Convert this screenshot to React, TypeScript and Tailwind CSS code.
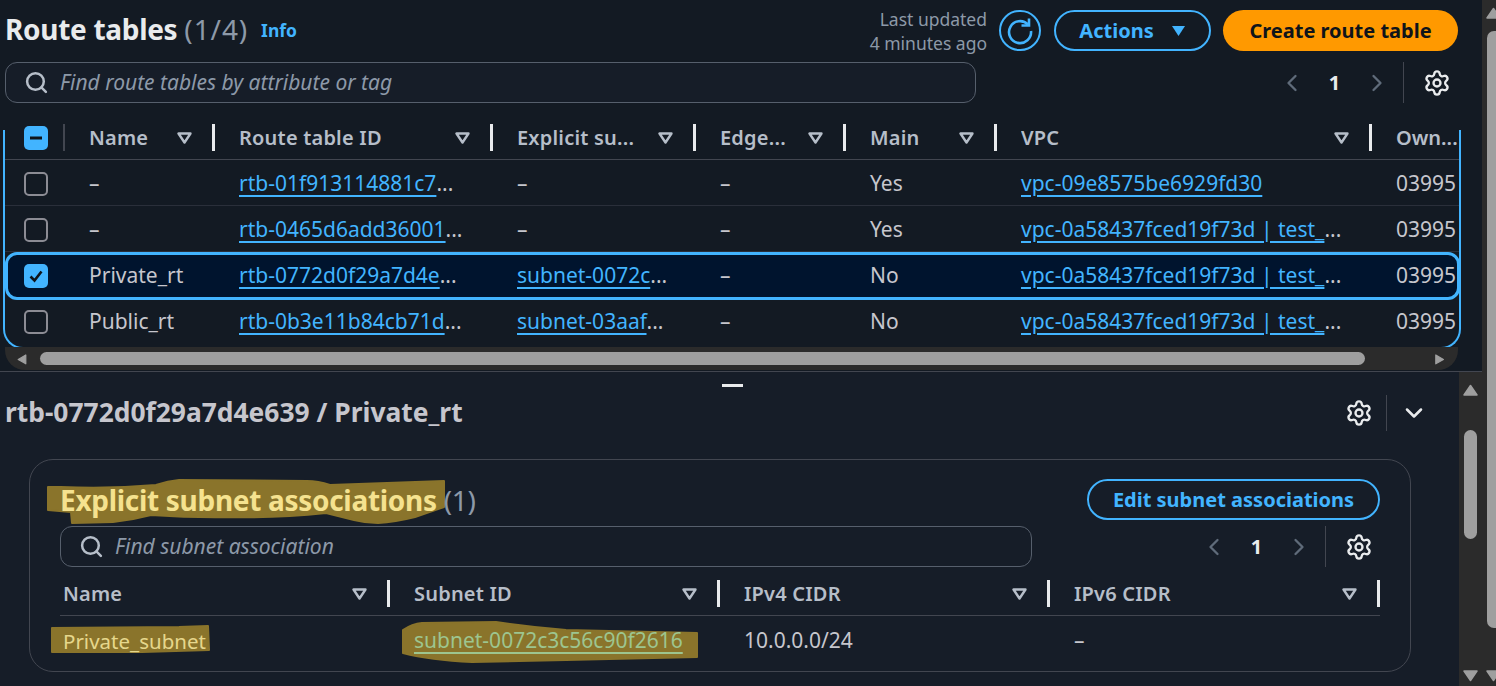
import { ChevronLeft, ChevronRight, ChevronDown, Search, Settings } from 'lucide-react';

const FONT = "font-['Noto_Sans',sans-serif]";

const COLS = [
  { label: 'Name', w: 'w-[150px]' },
  { label: 'Route table ID', w: 'w-[278px]' },
  { label: 'Explicit su...', w: 'w-[203px]' },
  { label: 'Edge...', w: 'w-[150px]' },
  { label: 'Main', w: 'w-[151px]' },
  { label: 'VPC', w: 'w-[375px]' },
];

const ROWS = [
  { name: '–', id: 'rtb-01f913114881c7', sub: '', main: 'Yes', vpc: 'vpc-09e8575be6929fd30', tail: '' },
  { name: '–', id: 'rtb-0465d6add36001', sub: '', main: 'Yes', vpc: 'vpc-0a58437fced19f73d | test_', tail: '...' },
  { name: 'Private_rt', id: 'rtb-0772d0f29a7d4e', sub: 'subnet-0072c', main: 'No', vpc: 'vpc-0a58437fced19f73d | test_', tail: '...', selected: true },
  { name: 'Public_rt', id: 'rtb-0b3e11b84cb71d', sub: 'subnet-03aaf', main: 'No', vpc: 'vpc-0a58437fced19f73d | test_', tail: '...' },
];

function SortIcon() {
  return (
    <svg width="15" height="12" viewBox="0 0 15 12" className="shrink-0">
      <path d="M1.5 1.5h12L7.5 10.5z" fill="none" stroke="#b6bec9" strokeWidth="2.4" strokeLinejoin="round" />
    </svg>
  );
}

function HeaderCell({ label, w, size = 'pl-[24px]' }: { label: string; w: string; size?: string }) {
  return (
    <div className={`${w} ${size} h-[27px] flex items-center shrink-0`}>
      <span className="flex-1 truncate text-[20px] tracking-[0.2px] font-semibold text-[#b6bec9]">{label}</span>
      <SortIcon />
      <span className="ml-[20px] w-[3px] h-[27px] bg-[#e9ebed]" />
    </div>
  );
}

function Box({ state }: { state?: 'dash' | 'check' }) {
  if (!state) return <span className="block w-[24px] h-[24px] rounded-[5px] border-2 border-[#8c8c94]" />;
  return (
    <span className="w-[24px] h-[24px] rounded-[5px] bg-[#42b4ff] flex items-center justify-center">
      <svg width="18" height="18" viewBox="0 0 18 18">
        {state === 'dash' ? (
          <path d="M3 9h12" stroke="#0f141a" strokeWidth="3" />
        ) : (
          <path d="M3.5 9.5l4 4 7-9" fill="none" stroke="#0f141a" strokeWidth="2.6" />
        )}
      </svg>
    </span>
  );
}

function Cut({ text }: { text: string }) {
  return (
    <span>
      <a className="underline decoration-2 underline-offset-[4px] text-[#42b4ff]">{text}</a>
      <span className="text-[#c6c6cd]">...</span>
    </span>
  );
}

function Pager() {
  return (
    <div className="flex items-center h-[41px] mr-[7px]">
      <ChevronLeft size={28} strokeWidth={2} className="text-[#5f6b7a]" />
      <span className="w-[57px] text-center text-[20px] font-bold text-[#e9ebed]">1</span>
      <ChevronRight size={28} strokeWidth={2} className="text-[#5f6b7a]" />
      <span className="ml-[12px] w-px h-[41px] bg-[#424650]" />
      <Settings size={28} strokeWidth={2} className="ml-[19px] text-[#e9ebed]" />
    </div>
  );
}

function Tri({ dir, color = '#9f9f9f', size = 15 }: { dir: 'up' | 'down' | 'left' | 'right'; color?: string; size?: number }) {
  const d = {
    up: 'M7.5 1.5L14 11H1z',
    down: 'M1 1h13L7.5 10.5z',
    left: 'M11 1v11L1.5 6.5z',
    right: 'M1 1v11l9.5-5.5z',
  }[dir];
  return (
    <svg width={size} height="12" viewBox="0 0 15 12" className="shrink-0">
      <path d={d} fill={color} stroke={color} strokeWidth="1.5" strokeLinejoin="round" />
    </svg>
  );
}

function TopPanel() {
  return (
    <section className="h-[371px] bg-[#131a23] pl-[5px] pr-[24px] pt-[10px]">
      <div className="flex h-[41px] items-center">
        <h1 className="text-[28px] font-bold text-[#e9ebed] leading-none -mt-[4px] tracking-[-0.3px]">
          Route tables <span className="font-normal tracking-[0.9px] text-[#8d99a8]">(1/4)</span>
        </h1>
        <a className="ml-[13px] text-[17.5px] font-bold text-[#42b4ff]">Info</a>
        <div className="ml-auto text-right text-[17.5px] leading-[24px] text-[#8d99a8]">
          <div>Last updated</div>
          <div>4 minutes ago</div>
        </div>
        <button className="ml-[12px] w-[42px] h-[41px] rounded-full border-[2.5px] border-[#42b4ff] flex items-center justify-center">
          <svg width="28" height="28" viewBox="0 0 28 28" fill="none" stroke="#42b4ff" strokeWidth="2.6">
            <path d="M22 7.5A11 11 0 1 0 25 14" />
            <path d="M15.5 8.5h7.5V1.5" />
          </svg>
        </button>
        <button className="ml-[13px] w-[157px] h-[41px] rounded-full border-[2.5px] border-[#42b4ff] flex items-center justify-center gap-[17px] text-[20px] font-bold text-[#42b4ff]">
          Actions
          <svg width="15" height="12" viewBox="0 0 15 12">
            <path d="M1 1h13L7.5 11z" fill="#42b4ff" />
          </svg>
        </button>
        <button className="ml-[12px] w-[235px] h-[41px] rounded-full bg-[#ff9900] text-[20px] font-bold text-[#0f141a]">
          Create route table
        </button>
      </div>

      <div className="mt-[11px] flex items-center">
        <div className="w-[971px] h-[41px] rounded-[12px] border border-[#565f6c] flex items-center pl-[18px] gap-[11px] bg-[#161d28]">
          <Search size={25} strokeWidth={2.4} className="text-[#b6bec9]" />
          <span className="text-[21px] italic text-[#8d99a8]">Find route tables by attribute or tag</span>
        </div>
        <div className="ml-auto">
          <Pager />
        </div>
      </div>

      {/* table */}
      <div className="relative -ml-[2px] mt-[13px] w-[1458px] h-[233px]">
        <div className="h-full rounded-b-[20px] border-x-2 border-b-2 border-[#42b4ff] overflow-hidden text-[21px] text-[#c6c6cd]">
          <div className="h-[44px] flex items-center border-b border-[#424650] whitespace-nowrap">
            <div className="w-[60px] shrink-0 flex items-center pl-[19px]">
              <Box state="dash" />
              <span className="ml-[15px] w-[2px] h-[27px] bg-[#424650]" />
            </div>
            {COLS.map((c) => (
              <HeaderCell key={c.label} label={c.label} w={c.w} />
            ))}
            <span className="pl-[24px] text-[20px] font-semibold text-[#b6bec9]">Own...</span>
          </div>
          {ROWS.map((r) => (
            <div
              key={r.id}
              className={
                r.selected
                  ? 'h-[48px] -mb-[2px] relative flex items-center whitespace-nowrap bg-[#00142e] border-[3px] border-[#42b4ff] rounded-[12px] -mr-[1px]'
                  : 'h-[46px] pt-[2px] flex items-center whitespace-nowrap border-b border-[#2a2f3a] last:border-b-0'
              }
            >
              <div className={r.selected ? 'w-[57px] shrink-0 pl-[16px]' : 'w-[60px] shrink-0 pl-[19px]'}>
                <Box state={r.selected ? 'check' : undefined} />
              </div>
              <div className="w-[150px] pl-[24px] shrink-0">{r.name}</div>
              <div className="w-[278px] pl-[24px] shrink-0"><Cut text={r.id} /></div>
              <div className="w-[203px] pl-[24px] shrink-0">{r.sub ? <Cut text={r.sub} /> : '–'}</div>
              <div className="w-[150px] pl-[24px] shrink-0">–</div>
              <div className="w-[151px] pl-[24px] shrink-0">{r.main}</div>
              <div className="w-[375px] pl-[24px] shrink-0">
                <a className="underline decoration-2 underline-offset-[4px] text-[#42b4ff]">{r.vpc}</a>
                {r.tail}
              </div>
              <div className="pl-[24px] shrink-0">03995</div>
            </div>
          ))}
        </div>
        {/* the focus outline only starts below the top of the header row */}
        <span className="absolute left-0 top-0 w-[2px] h-[14px] bg-[#131a23]" />
        <span className="absolute right-0 top-0 w-[2px] h-[14px] bg-[#131a23]" />
      </div>

      {/* horizontal scrollbar, sits on the table's bottom border */}
      <div className="relative -mt-[2px] w-[1453px] h-[23px] bg-[#2b2b2b] rounded-b-[20px] flex items-center pl-[12px] pr-[11px]">
        <Tri dir="left" size={12} />
        <span className="ml-[11px] w-[1325px] h-[13px] rounded-full bg-[#9f9f9f]" />
        <span className="ml-auto"><Tri dir="right" size={12} /></span>
      </div>
    </section>
  );
}

function BottomPanel() {
  return (
    <section className="flex-1 flex border-t border-[#424650] min-h-0">
      <div className="flex-1 bg-[#161d28] pl-[5px] pr-[42px] min-w-0">
        <div className="flex justify-center pt-[12px] pl-[42px]">
          <span className="w-[21px] h-[3px] bg-[#e9ebed]" />
        </div>
        <div className="mt-[8px] flex items-center h-[36px]">
          <h2 className="text-[26.4px] font-bold text-[#c6c6cd]">rtb-0772d0f29a7d4e639 / Private_rt</h2>
          <Settings size={28} strokeWidth={2} className="ml-auto -mr-px text-[#e9ebed]" />
          <span className="ml-[14px] w-px h-[36px] bg-[#424650]" />
          <ChevronDown size={28} strokeWidth={2.2} className="ml-[13px] -mr-[11px] text-[#e9ebed]" />
        </div>

        <div className="relative mt-[28px] ml-[24px] w-[1382px] h-[213px] rounded-[24px] border border-[#424650] pl-[30px] pr-[30px] pt-[19px]">
          {/* marker strokes drawn over the screenshot */}
          <svg viewBox="30 460 1380 211" className="absolute inset-0 w-full h-full pointer-events-none">
            <g fill="#8a742b" stroke="#8a742b" strokeWidth="2" strokeLinejoin="round">
              <path d="M48 487L61 487Q110 489 156 485Q168 481 179 480L307 481Q318 481 330 485L444 481L444 507L415 517Q395 522 378 523Q366 523 354 520L326 513Q280 518 236 517Q195 518 151 515Q132 520 113 522L72 523L71 512L48 510Z" />
              <path d="M52 628L179 627L208 626L209 650L142 652L52 652Z" />
              <path d="M403 630Q412 624 422 623L496 622Q530 627 566 630L697 633L697 657L566 660L472 662Q430 660 403 653Z" />
            </g>
          </svg>

          <div className="relative flex items-center h-[41px]">
            <h3 className="text-[28px] font-bold text-[#f5e28f] tracking-[-0.3px] whitespace-nowrap">
              Explicit subnet associations <span className="font-normal text-[#8d99a8]">(1)</span>
            </h3>
            <button className="ml-auto w-[293px] h-[41px] rounded-full border-[2.5px] border-[#42b4ff] text-[20px] font-bold text-[#42b4ff]">
              Edit subnet associations
            </button>
          </div>

          <div className="relative mt-[6px] flex items-center">
            <div className="w-[972px] h-[41px] rounded-[12px] border border-[#565f6c] flex items-center pl-[18px] gap-[11px]">
              <Search size={25} strokeWidth={2.4} className="text-[#b6bec9]" />
              <span className="text-[21px] italic text-[#8d99a8]">Find subnet association</span>
            </div>
            <div className="ml-auto">
              <Pager />
            </div>
          </div>

          <div className="relative mt-[5px] h-[44px] flex items-center border-b border-[#424650] whitespace-nowrap">
            <HeaderCell label="Name" w="w-[330px]" size="pl-[3px]" />
            <HeaderCell label="Subnet ID" w="w-[330px]" />
            <HeaderCell label="IPv4 CIDR" w="w-[330px]" />
            <HeaderCell label="IPv6 CIDR" w="w-[330px]" />
          </div>

          <div className="relative h-[48px] pt-[2px] flex items-center whitespace-nowrap text-[21px] text-[#c6c6cd]">
            <div className="w-[330px] pl-[3px] text-[20.5px] text-[#e6d78c]">Private_subnet</div>
            <div className="w-[330px] pl-[24px]">
              <a className="underline decoration-2 underline-offset-[4px] text-[#9dc58f]">subnet-0072c3c56c90f2616</a>
            </div>
            <div className="w-[330px] pl-[24px]">10.0.0.0/24</div>
            <div className="w-[330px] pl-[24px]">–</div>
          </div>
        </div>
      </div>

      {/* inner scrollbar */}
      <div className="w-[23px] bg-[#2b2b2b] flex flex-col items-center pl-[4px] pr-[4px]">
        <div className="mt-[12px]"><Tri dir="up" /></div>
        <span className="mt-[34px] w-[13px] h-[109px] rounded-full bg-[#9f9f9f]" />
        <div className="mt-auto mb-[4px]"><Tri dir="down" /></div>
      </div>
    </section>
  );
}

export default function App() {
  return (
    <div className={`${FONT} w-[1496px] h-[686px] overflow-hidden flex bg-[#131a23]`}>
      <main className="w-[1482px] flex flex-col">
        <TopPanel />
        <BottomPanel />
      </main>
      {/* page scrollbar */}
      <aside className="w-[14px] bg-[#2b2b2b] flex flex-col pl-[4px] overflow-hidden">
        <div className="mt-[7px]"><Tri dir="up" /></div>
        <span className="mt-[12px] ml-px w-[16px] h-[597px] rounded-[7px] bg-[#9f9f9f] shrink-0" />
        <div className="mt-auto mb-[4px]"><Tri dir="down" /></div>
      </aside>
    </div>
  );
}
